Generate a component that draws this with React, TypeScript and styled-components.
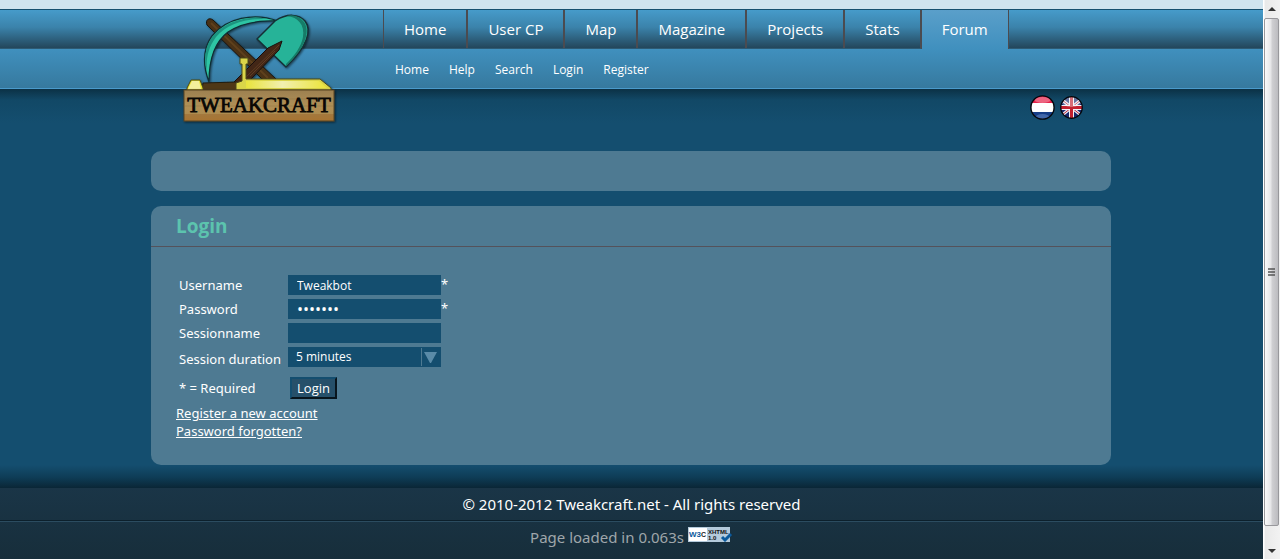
import React from 'react';
import styled, { createGlobalStyle } from 'styled-components';

const sans = '"Noto Sans", "Open Sans", sans-serif';
const uiFont = '"Open Sans", "Noto Sans", sans-serif';

const GlobalStyle = createGlobalStyle`
  *, *::before, *::after { box-sizing: border-box; }
  body {
    margin: 0;
    background: #144e6f;
    color: #fff;
    font-family: ${sans};
    font-size: 13px;
  }
  a { color: inherit; }
`;

const Shell = styled.div`
  display: flex;
  min-height: 100vh;
`;

const Page = styled.div`
  display: flex;
  flex-direction: column;
  flex: 1;
  min-width: 0;
`;

const Container = styled.div`
  position: relative;
  width: 100%;
  max-width: 961px;
  margin: 0 auto;
  padding-right: 1px;
`;

const Header = styled.header`
  border-top: 9px solid #d0e4ef;
`;

const NavBar = styled.div`
  height: 40px;
  border-top: 1px solid #17506f;
  border-bottom: 1px solid #2d5a73;
  background: linear-gradient(#469bca, #3b83ab 45%, #23465b);
`;

const SubBar = styled.div`
  height: 40px;
  border-bottom: 1px solid #4a9acb;
  background: linear-gradient(#4090be, #36799e);
`;

const Tabs = styled.nav`
  display: flex;
  padding-left: 232px;
`;

const Tab = styled.a<{ $active?: boolean }>`
  flex: none;
  height: ${(p) => (p.$active ? 39 : 38)}px;
  padding: 0 20px;
  border: solid #4b4b50;
  border-width: 0 1px;
  background: ${(p) => (p.$active ? 'linear-gradient(#5a9fca, #4090be)' : 'none')};
  font-family: ${uiFont};
  font-size: 15px;
  line-height: 38px;
  text-decoration: none;
`;

const SubNav = styled.nav`
  display: flex;
  gap: 20px;
  padding-left: 244px;
`;

const SubLink = styled.a`
  font-family: ${uiFont};
  font-size: 12px;
  line-height: 41px;
  text-decoration: none;
`;

const LogoLink = styled.a`
  position: absolute;
  top: 0;
  left: 24px;
  z-index: 1;

  svg { display: block; }
`;

const Main = styled.main`
  flex: 1;
  padding-bottom: 23px;
  background:
    linear-gradient(#0b3145, rgba(16, 68, 96, 0.6) 11px, rgba(20, 78, 111, 0) 34px) top / 100% 34px no-repeat,
    linear-gradient(rgba(20, 78, 111, 0), #0e3d57 12px, #0a2636) bottom / 100% 23px no-repeat,
    #144e6f;
`;

const Languages = styled.div`
  display: flex;
  justify-content: flex-end;
  align-items: center;
  gap: 5px;
  height: 62px;
  padding: 0 28px 25px 0;

  a, svg { display: block; }
`;

const Panel = styled.section`
  min-height: 40px;
  border-radius: 10px;
  background: #4e7a92;

  & + & { margin-top: 15px; }
`;

const PanelTitle = styled.h1`
  margin: 0;
  padding-left: 25px;
  border-bottom: 1px solid #54525b;
  color: #5cc4ae;
  font-family: ${uiFont};
  font-size: 19px;
  line-height: 40px;
`;

const PanelBody = styled.div`
  padding: 28px 25px 25px;
`;

const Form = styled.form`
  display: grid;
  grid-template-columns: 109px 153px 1fr;
  row-gap: 4px;
  padding-left: 3px;
  margin-bottom: 3px;
`;

const Label = styled.label<{ $height?: number }>`
  line-height: ${(p) => p.$height ?? 20}px;
  white-space: nowrap;
`;

const Field = styled.input`
  width: 100%;
  height: 20px;
  padding: 0 9px;
  border: 0;
  border-radius: 0;
  outline: 0;
  background: #144e6f;
  color: #fff;
  font: 12px ${uiFont};

  &[type='password'] { font-size: 16px; }
`;

const Mark = styled.span`
  line-height: 18px;
`;

const SelectBox = styled.div`
  position: relative;
  height: 20px;

  svg {
    position: absolute;
    top: 0;
    right: 0;
    pointer-events: none;
  }
`;

const Select = styled.select`
  display: block;
  width: 100%;
  height: 20px;
  padding: 0 24px 2px 8px;
  appearance: none;
  border: 0;
  border-radius: 0;
  background: #144e6f;
  color: #fff;
  font: 12px ${uiFont};
`;

const Submit = styled.button`
  justify-self: start;
  align-self: center;
  width: 47px;
  height: 22px;
  margin-left: 2px;
  padding: 0;
  border: 2px solid;
  border-color: #144e6f #08151d #08151d #144e6f;
  background: #26506a;
  color: #fff;
  font: 13px/18px ${uiFont};
`;

const Links = styled.div`
  display: flex;
  flex-direction: column;
  align-items: flex-start;
  line-height: 18px;
`;

const Footer = styled.footer`
  background: linear-gradient(#1a3547, #172e3b);
  text-align: center;
  font-size: 15px;
`;

const Copyright = styled.p`
  margin: 0;
  border-bottom: 1px solid #0c202c;
  line-height: 32px;
`;

const Timing = styled.p`
  display: flex;
  justify-content: center;
  gap: 4px;
  height: 38px;
  margin: 0;
  border-top: 1px solid #2b4c60;
  color: #9fa6aa;
  line-height: 30px;

  a { margin-top: 5px; }
  svg { display: block; }
`;

const ScrollTrack = styled.div`
  display: flex;
  flex-direction: column;
  align-items: center;
  flex: 0 0 17px;
  background: linear-gradient(90deg, #fff 1px, #e9e9e9 2px, #f2f2f2);

  svg { flex: none; display: block; }
`;

const Thumb = styled.div`
  display: flex;
  align-items: center;
  justify-content: center;
  flex: 1;
  width: 15px;
  border: 1px solid #98989c;
  border-radius: 2px;
  background: linear-gradient(90deg, #fafafa, #e6e6e8 45%, #cfcfd2 55%, #bcbcc0);
`;

const navItems = ['Home', 'User CP', 'Map', 'Magazine', 'Projects', 'Stats', 'Forum'];
const subItems = ['Home', 'Help', 'Search', 'Login', 'Register'];

const Logo = () => (
  <svg width="168" height="120" viewBox="175 10 168 120" role="img" aria-label="Tweakcraft">
    <defs>
      <linearGradient id="wood" x1="0" y1="0" x2="0" y2="1">
        <stop offset="0" stopColor="#9c8050" />
        <stop offset="0.5" stopColor="#b09056" />
        <stop offset="0.76" stopColor="#ae8c50" />
        <stop offset="0.78" stopColor="#a3783d" />
        <stop offset="1" stopColor="#a87431" />
      </linearGradient>
      <linearGradient id="gold" x1="0" y1="0" x2="1" y2="0">
        <stop offset="0" stopColor="#e9e33c" />
        <stop offset="0.45" stopColor="#f1efb0" />
        <stop offset="1" stopColor="#ece537" />
      </linearGradient>
      <filter id="drop" x="-10%" y="-10%" width="125%" height="125%">
        <feDropShadow dx="1" dy="1" stdDeviation="1" floodOpacity="0.55" />
      </filter>
    </defs>
    <g filter="url(#drop)" strokeLinejoin="round">
      <path d="M207 25C205 20 209 17 213 20L276 79L272 84L262 79Z" fill="#4a3016" stroke="#171512" />
      <path d="M211 23L268 78" stroke="#5e411d" strokeWidth="2" />
      <path d="M209 82C203 66 202 50 212 36C226 18 254 12 278 21C256 20 240 24 228 32C212 44 209 64 209 82Z" fill="#2fc5a4" stroke="#112e35" strokeWidth="1.3" />
      <path d="M212 37C225 21 248 15 268 19C246 18 227 24 216 37C207 49 206 61 207 72C204 58 205 47 212 37Z" fill="#1f9480" />
      <path d="M257 39L275 21C287 13 299 14 305 21C312 30 308 46 286 67L257 39Z" fill="#27b398" stroke="#132f35" strokeWidth="1.5" />
      <path d="M287 16C298 17 305 25 303 37C301 47 295 55 286 64V66C304 50 311 32 304 22C299 16 293 14 287 16Z" fill="#177b67" />
      <path d="M282 41L279 50L250 80L243 86L234 82L268 48Z" fill="#422716" stroke="#18110c" />
      <path d="M279 45L244 79M275 51L250 76" stroke="#603c23" strokeWidth="1" />
      <path d="M203 83L237 82V90H202Z" fill="#503817" stroke="#211b10" />
      <path d="M191 80H200L203 88V90H187V88Z" fill="#e7e12c" stroke="#4b4a1c" />
      <path d="M192 81H199L201 89H188Z" fill="#f3f09b" />
      <path d="M236 90V83L242 81V64H240V58H248V64H246V79H320L331 88V90Z" fill="#dad548" stroke="#4b4a1c" />
      <path d="M246 81H319L327 88H246Z" fill="url(#gold)" />
    </g>
    <g filter="url(#drop)">
      <rect x="184" y="90" width="150" height="31" fill="url(#wood)" stroke="#594522" />
      <path d="M185 99H333M185 106H333" stroke="#8d7040" strokeOpacity="0.4" />
    </g>
    <text x="259" y="112" textAnchor="middle" fontFamily='"Liberation Serif", serif' fontSize="21" fill="#090704" stroke="#090704" strokeWidth="0.8">TWEAKCRAFT</text>
  </svg>
);

const DutchFlag = () => (
  <svg width="25" height="25" viewBox="0 0 25 25">
    <defs>
      <clipPath id="nl"><circle cx="12.5" cy="12.5" r="11.5" /></clipPath>
    </defs>
    <g clipPath="url(#nl)">
      <path d="M0 0H25V8H0Z" fill="#e5214a" />
      <path d="M0 8H25V17H0Z" fill="#fff" />
      <path d="M0 17H25V25H0Z" fill="#153d87" />
      <ellipse cx="12.5" cy="5" rx="8" ry="3" fill="#fff" fillOpacity="0.3" />
      <ellipse cx="12.5" cy="22" rx="7" ry="3" fill="#84a8dc" fillOpacity="0.4" />
    </g>
    <circle cx="12.5" cy="12.5" r="11.6" fill="none" stroke="#05070c" strokeWidth="1.4" />
  </svg>
);

const BritishFlag = () => (
  <svg width="23" height="23" viewBox="0 0 23 23">
    <defs>
      <clipPath id="uk"><circle cx="11.5" cy="11.5" r="10.7" /></clipPath>
    </defs>
    <g clipPath="url(#uk)">
      <path d="M0 0H23V23H0Z" fill="#17286e" />
      <path d="M1 3L22 20M22 3L1 20" stroke="#e4e8f2" strokeWidth="3" />
      <path d="M1 3L22 20M22 3L1 20" stroke="#c3283b" strokeWidth="1" />
      <path d="M11.5 0V23M0 11.5H23" stroke="#f2f2f6" strokeWidth="5" />
      <path d="M11.5 0V23M0 11.5H23" stroke="#c3202f" strokeWidth="3" />
      <ellipse cx="11.5" cy="4" rx="11" ry="7" fill="#fff" fillOpacity="0.35" />
    </g>
    <circle cx="11.5" cy="11.5" r="10.8" fill="none" stroke="#05070c" strokeWidth="1.2" />
  </svg>
);

const ValidBadge = () => (
  <svg width="45" height="15" viewBox="0 0 45 15" role="img" aria-label="Valid XHTML 1.0">
    <path d="M0 0H42V15H0Z" fill="#b4cadb" />
    <path d="M1 1H19V14H1Z" fill="#fff" />
    <g fontFamily='"Liberation Sans", sans-serif' fontWeight="bold">
      <text x="1" y="10" fontSize="8" fill="#0b5a9d">W3</text>
      <text x="13" y="10" fontSize="7" fill="#222">C</text>
      <text x="20" y="7" fontSize="6" fill="#111">XHTML</text>
      <text x="20" y="13" fontSize="6" fill="#111">1.0</text>
    </g>
    <path d="M34 10L37 13L43 7" fill="none" stroke="#0b5a9d" strokeWidth="3" />
  </svg>
);

export default function App() {
  return (
    <>
      <GlobalStyle />
      <Shell>
        <Page>
          <Header>
            <NavBar>
              <Container>
                <LogoLink href="#"><Logo /></LogoLink>
                <Tabs>
                  {navItems.map((item) => (
                    <Tab key={item} href="#" $active={item === 'Forum'}>{item}</Tab>
                  ))}
                </Tabs>
              </Container>
            </NavBar>
            <SubBar>
              <Container>
                <SubNav>
                  {subItems.map((item) => <SubLink key={item} href="#">{item}</SubLink>)}
                </SubNav>
              </Container>
            </SubBar>
          </Header>
          <Main>
            <Container>
              <Languages>
                <a href="#" aria-label="Nederlands"><DutchFlag /></a>
                <a href="#" aria-label="English"><BritishFlag /></a>
              </Languages>
              <Panel />
              <Panel>
                <PanelTitle>Login</PanelTitle>
                <PanelBody>
                  <Form onSubmit={(e) => e.preventDefault()}>
                    <Label htmlFor="username">Username</Label>
                    <Field id="username" defaultValue="Tweakbot" />
                    <Mark>*</Mark>
                    <Label htmlFor="password">Password</Label>
                    <Field id="password" type="password" defaultValue="tweaker" />
                    <Mark>*</Mark>
                    <Label htmlFor="session">Sessionname</Label>
                    <Field id="session" />
                    <span />
                    <Label htmlFor="duration" $height={24}>Session duration</Label>
                    <SelectBox>
                      <Select id="duration">
                        <option>5 minutes</option>
                      </Select>
                      <svg width="20" height="20" viewBox="0 0 20 20">
                        <path d="M0.5 1V19" stroke="#4e7a92" />
                        <path d="M3 5H16L10 16H9Z" fill="#5a8ba8" />
                      </svg>
                    </SelectBox>
                    <span />
                    <Label as="span" $height={26}>* = Required</Label>
                    <Submit type="submit">Login</Submit>
                  </Form>
                  <Links>
                    <a href="#">Register a new account</a>
                    <a href="#">Password forgotten?</a>
                  </Links>
                </PanelBody>
              </Panel>
            </Container>
          </Main>
          <Footer>
            <Copyright>© 2010-2012 Tweakcraft.net - All rights reserved</Copyright>
            <Timing>
              Page loaded in 0.063s
              <a href="#"><ValidBadge /></a>
            </Timing>
          </Footer>
        </Page>
        <ScrollTrack aria-hidden="true">
          <svg width="17" height="18" viewBox="0 0 17 18"><path d="M5 11L9 7L13 11Z" fill="#333" /></svg>
          <Thumb>
            <svg width="8" height="9" viewBox="0 0 8 9">
              <path d="M0 1H7M0 4H7M0 7H7" stroke="#555" strokeWidth="1.5" />
            </svg>
          </Thumb>
          <svg width="17" height="33" viewBox="0 0 17 33"><path d="M5 23H13L9 27Z" fill="#333" /></svg>
        </ScrollTrack>
      </Shell>
    </>
  );
}
